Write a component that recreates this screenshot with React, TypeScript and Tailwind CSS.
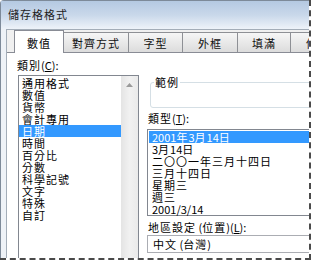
import React from "react";

const cats = ["通用格式", "數值", "貨幣", "會計專用", "日期", "時間", "百分比", "分數", "科學記號", "文字", "特殊", "自訂"];
const types = ["2001年3月14日", "3月14日", "二〇〇一年三月十四日", "三月十四日", "星期三", "週三", "2001/3/14"];
const tabs: { label: string; w: string }[] = [
  { label: "對齊方式", w: "w-[65px]" },
  { label: "字型", w: "w-[54px]" },
  { label: "外框", w: "w-[55px]" },
  { label: "填滿", w: "w-[53px]" },
  { label: "保護", w: "w-[55px]" },
];

function T({ s }: { s: string }) {
  const parts = s.split(/([\u3000-\u9fff\uff00-\uffef]+)/).filter((p) => p.length > 0);
  return (
    <span>
      {parts.map((p, i) =>
        /[\u3000-\u9fff\uff00-\uffef]/.test(p) ? (
          <span key={i} className="tracking-[1px]">
            {p}
          </span>
        ) : (
          <span key={i}>{p}</span>
        )
      )}
    </span>
  );
}

export default function App() {
  return (
    <div className="w-[311px] h-[260px] overflow-hidden bg-white border-r-2 border-b-2 border-dashed border-[#4a4a4a] font-['Noto_Sans_CJK_TC','Noto_Sans',sans-serif] text-[11px] leading-[14px] text-black">
      <div className="flex flex-col w-[340px] h-[300px] border-l border-t border-[#7d8a99] rounded-tl-[4px] bg-[#e6ecf3]">
        <div className="h-[28px] shrink-0 bg-gradient-to-b from-[#b4c9e2] via-[#c9d8ea] to-[#eef3f9] pl-[7px] pt-[6px] text-[#1e1e1e]">
          <T s="儲存格格式" />
        </div>
        <div className="flex flex-1 min-w-0">
          <div className="w-[5px] shrink-0 bg-[#eef2f7]" />
          <div className="flex-1 min-w-0 flex flex-col border-l border-t border-[#a3adb8] bg-[#f0f0f0]">
            {/* tabs */}
            <div className="flex items-end h-[22px] pl-[7px]">
              <div className="relative z-10 -mb-px h-[23px] w-[50px] shrink-0 flex items-center justify-center pt-[1px] bg-white border-l border-t border-r border-[#898c95]">
                <T s="數值" />
              </div>
              {tabs.map((t) => (
                <div
                  key={t.label}
                  className={`${t.w} shrink-0 h-[20px] flex items-center justify-center pt-[1px] border-t border-r border-[#8e9095] bg-gradient-to-b from-[#f6f6f6] to-[#dcdcdc] text-[#111]`}
                >
                  <T s={t.label} />
                </div>
              ))}
            </div>
            {/* panel */}
            <div className="flex-1 min-w-0 flex bg-white border-t border-[#898c95]">
              {/* left column */}
              <div className="w-[132px] shrink-0 pl-[10px] pt-[5px] flex flex-col">
                <div>
                  <T s="類別" />(<u>C</u>):
                </div>
                <div className="mt-[3px] ml-[1px] w-[121px] h-[200px] flex border border-[#828790]">
                  <div className="w-[102px] shrink-0 pt-[1px] flex flex-col">
                    {cats.map((c) => (
                      <div
                        key={c}
                        className={`h-[12px] leading-[12px] pl-[3px] whitespace-nowrap ${c === "日期" ? "bg-[#3399ff] text-white" : ""}`}
                      >
                        <T s={c} />
                      </div>
                    ))}
                  </div>
                  <div className="w-[17px] shrink-0 bg-gradient-to-r from-[#e4e4e4] via-[#f1f1f1] to-[#eaeaea] flex flex-col">
                    <div className="h-[17px] flex items-center justify-center">
                      <svg width="7" height="4" viewBox="0 0 7 4">
                        <path d="M0 4 L3.5 0 L7 4 Z" fill="#9a9a9a" />
                      </svg>
                    </div>
                  </div>
                </div>
              </div>
              {/* right column */}
              <div className="ml-[8px] flex-1 min-w-0 flex flex-col">
                <fieldset className="mt-[22px] ml-[3px] h-[33px] border border-[#d5dfe5] rounded-[3px]">
                  <legend className="ml-[3px] px-[1px] leading-[14px]">
                    <T s="範例" />
                  </legend>
                </fieldset>
                <div className="mt-[3px] ml-[1px]">
                  <T s="類型" />(<u>T</u>):
                </div>
                <div className="mt-[4px] border border-[#828790] pl-[1px] pt-[1px] flex flex-col">
                  {types.map((t, i) => (
                    <div
                      key={t}
                      className={`h-[12px] leading-[12px] pl-[3px] whitespace-nowrap ${i === 0 ? "bg-[#3399ff] text-white" : ""}`}
                    >
                      <T s={t} />
                    </div>
                  ))}
                </div>
                <div className="mt-[4px] ml-[1px] whitespace-nowrap">
                  <T s="地區設定" /> (<T s="位置" />)(<u>L</u>):
                </div>
                <div className="mt-[1px] h-[18px] border border-[#abadb3] pl-[5px] flex items-center whitespace-nowrap">
                  <span>
                    <T s="中文" /> (<T s="台灣" />)
                  </span>
                </div>
                <div className="mt-[3px] ml-[1px] whitespace-nowrap overflow-hidden">
                  <T s="日期格式會將日期和時間序列值顯示為日期值。" />
                </div>
              </div>
            </div>
          </div>
        </div>
      </div>
    </div>
  );
}
